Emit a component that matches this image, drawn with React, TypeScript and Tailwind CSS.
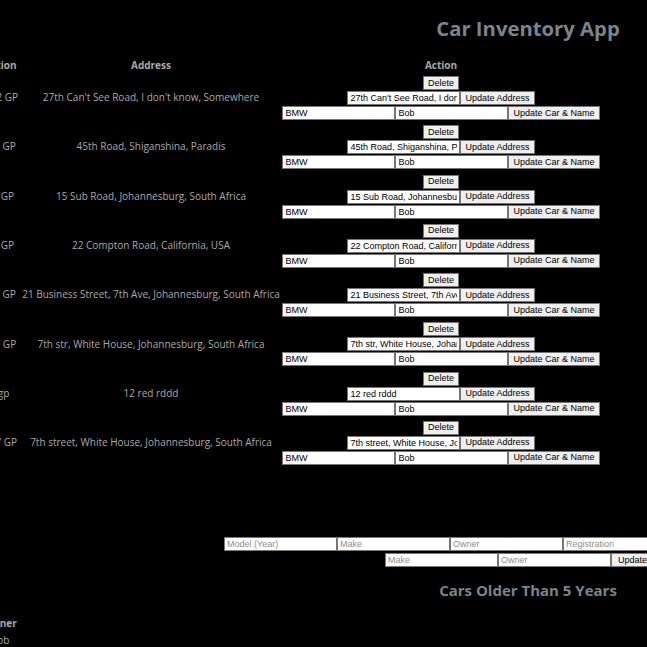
import React from 'react';

type Car = { model: string; make: string; owner: string; reg: string; address: string };

const cars: Car[] = [
  { model: '2012', make: 'BMW', owner: 'Bob', reg: 'BHTW 552 GP', address: "27th Can't See Road, I don't know, Somewhere" },
  { model: '2015', make: 'BMW', owner: 'Bob', reg: 'NDW 874 GP', address: '45th Road, Shiganshina, Paradis' },
  { model: '2009', make: 'BMW', owner: 'Bob', reg: 'KLM 336 GP', address: '15 Sub Road, Johannesburg, South Africa' },
  { model: '2018', make: 'BMW', owner: 'Bob', reg: 'HHX 908 GP', address: '22 Compton Road, California, USA' },
  { model: '2011', make: 'BMW', owner: 'Bob', reg: 'DWN 640 GP', address: '21 Business Street, 7th Ave, Johannesburg, South Africa' },
  { model: '2020', make: 'BMW', owner: 'Bob', reg: 'BMW 555 GP', address: '7th str, White House, Johannesburg, South Africa' },
  { model: '2001', make: 'BMW', owner: 'Bob', reg: 'ddd 12 gp', address: '12 red rddd' },
  { model: '2016', make: 'BMW', owner: 'Bob', reg: 'TRW 7777 GP', address: '7th street, White House, Johannesburg, South Africa' },
];

const btnBase =
  "h-[14px] shrink-0 border border-[#767676] bg-[#efefef] text-[9px] leading-none text-black font-['Liberation_Sans',Arial,sans-serif]";
const btn = `${btnBase} px-[4px]`;
const field =
  "h-[14px] w-[113px] shrink-0 border border-[#767676] bg-white px-[2px] text-[9px] leading-none text-black outline-none placeholder:text-[#8d8d8d] font-['Liberation_Sans',Arial,sans-serif]";

export default function App() {
  return (
    <div className="h-[647px] w-full overflow-hidden bg-black font-['Open_Sans',sans-serif] text-[10px] text-[#a9a9a9]">
      <div className="w-[1056px]">
        <h1 className="mt-[14px] text-center text-[20.3px] font-bold leading-[28px] text-[#7a848c]">Car Inventory App</h1>

        {/* inventory table */}
        <table className="mt-[15px] -ml-[194px] w-[794px] table-fixed">
          <colgroup>
            <col className="w-[70px]" />
            <col className="w-[36px]" />
            <col className="w-[40px]" />
            <col className="w-[68px]" />
            <col className="w-[262px]" />
            <col className="w-[318px]" />
          </colgroup>
          <thead>
            <tr className="h-[16px] font-bold">
              <th>Model (Year)</th>
              <th>Make</th>
              <th>Owner</th>
              <th className="whitespace-nowrap">Registration</th>
              <th>Address</th>
              <th>Action</th>
            </tr>
          </thead>
          <tbody>
            {cars.map((car, i) => (
              <tr key={i} className="h-[49.29px] text-center">
                <td>{car.model}</td>
                <td>{car.make}</td>
                <td>{car.owner}</td>
                <td className="whitespace-nowrap">{car.reg}</td>
                <td className="whitespace-nowrap">{car.address}</td>
                <td className="pt-[3px] align-top">
                  <div className="flex flex-col items-center gap-[1px]">
                    <button className={btn}>Delete</button>
                    <div className="flex justify-center">
                      <input className={field} defaultValue={car.address} />
                      <button className={btn}>Update Address</button>
                    </div>
                    <div className="flex justify-center">
                      <input className={field} defaultValue="BMW" />
                      <input className={field} defaultValue="Bob" />
                      <button className={btn}>Update Car &amp; Name</button>
                    </div>
                  </div>
                </td>
              </tr>
            ))}
          </tbody>
        </table>

        {/* add car */}
        <div className="mt-[70px] flex justify-center">
          <input className={field} placeholder="Model (Year)" />
          <input className={field} placeholder="Make" />
          <input className={field} placeholder="Owner" />
          <input className={field} placeholder="Registration" />
          <input className={field} placeholder="Address" />
          <button className={btn}>Add Car</button>
        </div>
        <div className="mt-[2px] flex justify-center">
          <input className={field} placeholder="Make" />
          <input className={field} placeholder="Owner" />
          <button className={`${btnBase} px-[6px]`}>Update Car</button>
        </div>

        <h2 className="mt-[13px] text-center text-[15px] font-bold leading-[20px] text-[#7a848c]">Cars Older Than 5 Years</h2>

        <table className="mt-[15px] -ml-[126px] w-[146px] table-fixed">
          <colgroup>
            <col className="w-[70px]" />
            <col className="w-[36px]" />
            <col className="w-[40px]" />
          </colgroup>
          <thead>
            <tr className="h-[16px] font-bold">
              <th>Model (Year)</th>
              <th>Make</th>
              <th>Owner</th>
            </tr>
          </thead>
          <tbody>
            <tr className="h-[18px] text-center">
              <td>2012</td>
              <td>BMW</td>
              <td>Bob</td>
            </tr>
          </tbody>
        </table>
      </div>
    </div>
  );
}
